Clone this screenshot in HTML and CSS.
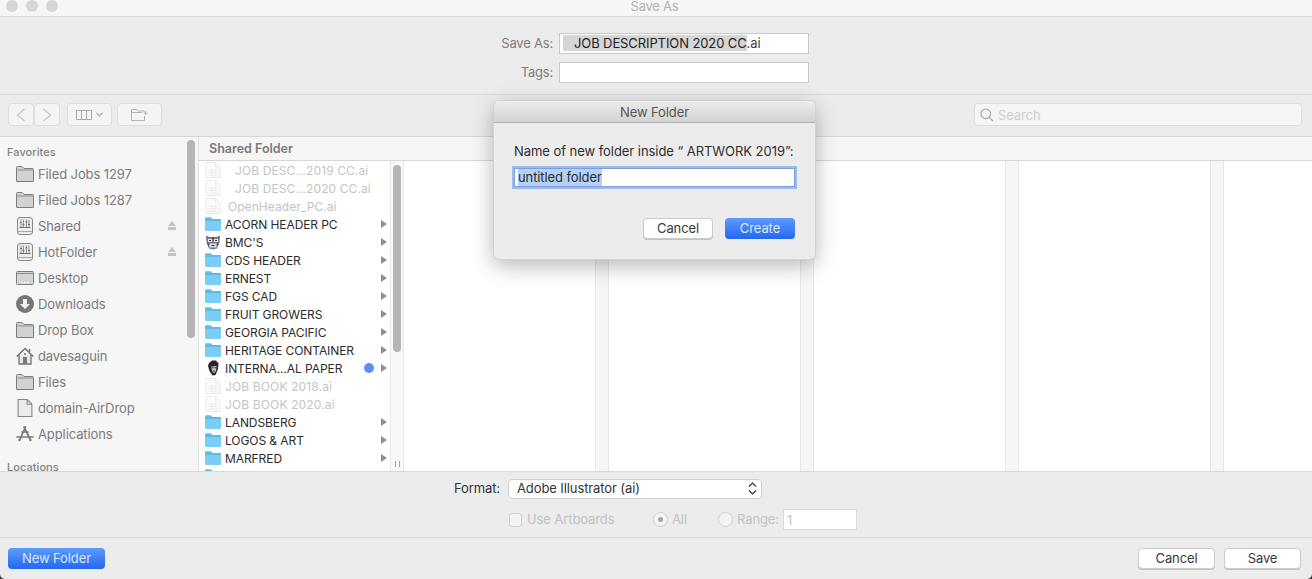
FILE: index.html
```html
<!DOCTYPE html>
<html lang="en">
<head>
<meta charset="utf-8">
<title>Save As</title>
<link rel="stylesheet" href="styles.css">
</head>
<body>
<svg class="defs" width="0" height="0" aria-hidden="true">
  <symbol id="gfolder" viewBox="0 0 18 16">
    <path d="M.5 15V1.500Q.5 .5 1.500 .5H6L8 2.500H16.500Q17.500 2.500 17.500 3.500V15Q17.500 15.500 17 15.500H1Q.5 15.500 .5 15Z" fill="#d2d2d2" stroke="#7d7d7d"/>
    <path d="M.5 4H17.500" stroke="#8d8d8d" fill="none"/>
  </symbol>
  <symbol id="server" viewBox="0 0 16 18">
    <rect x=".5" y=".5" width="15" height="17" rx="2.500" fill="#ededed" stroke="#8a8a8a"/>
    <path d="M4 2.500V10M6.500 2.500V10M9.500 2.500V10M12 2.500V10" stroke="#8a8a8a" stroke-width=".9" fill="none"/>
    <path d="M3 5.500H5M5.500 7.500H7.500M8.500 5H10.500M11 7.500H13M2.500 10.500H13.500" stroke="#6d6d6d" stroke-width="1.100" fill="none"/>
    <path d="M1 14.500H15" stroke="#a8a8a8"/>
  </symbol>
  <symbol id="desktop" viewBox="0 0 18 14">
    <rect x=".5" y=".5" width="17" height="13" rx="1" fill="#d4d4d4" stroke="#7d7d7d"/>
    <path d="M1 2.500H17" stroke="#8d8d8d"/>
    <path d="M5 11.500H6.500M8 11.500H9.500M11 11.500H12.500" stroke="#fff" stroke-width="1.500"/>
  </symbol>
  <symbol id="download" viewBox="0 0 18 18">
    <circle cx="9" cy="9" r="9" fill="#777"/>
    <path d="M7 4H11V9H14L9 14L4 9H7Z" fill="#f2f2f2"/>
  </symbol>
  <symbol id="home" viewBox="0 0 18 18">
    <path d="M3 8V17H15V8" fill="#e6e6e6" stroke="#757575" stroke-width="1.300"/>
    <path d="M.8 9.500L9 1.500L17.200 9.500M13.500 2V5" fill="none" stroke="#757575" stroke-width="1.600"/>
    <path d="M7 10H11V17H7Z" fill="#777"/>
    <circle cx="9" cy="7" r="1.100" fill="#777"/>
  </symbol>
  <symbol id="file" viewBox="0 0 14 17">
    <path d="M.5 .5H9L13.500 5V16.500H.5Z" fill="#ececec" stroke="#858585"/>
    <path d="M9 .5V5H13.500" fill="none" stroke="#858585"/>
  </symbol>
  <symbol id="apps" viewBox="0 0 18 16">
    <path d="M9.500 1L4 13M8 1L14 13M1 11H17M6 6H12" fill="none" stroke="#7b7b7b" stroke-width="1.700" stroke-linecap="round"/>
    <circle cx="3.500" cy="14" r="1.200" fill="#7b7b7b"/>
    <circle cx="14.500" cy="14" r="1.200" fill="#7b7b7b"/>
  </symbol>
  <symbol id="bfolder" viewBox="0 0 16 14">
    <path d="M0 12.800V1.200Q0 .2 1 .2H5.300Q6 .2 6.500 .8L7.300 2H15Q16 2 16 3V12.800Q16 13.800 15 13.800H1Q0 13.800 0 12.800Z" fill="#62bff0"/>
    <path d="M0 3.200H16V12.800Q16 13.800 15 13.800H1Q0 13.800 0 12.800Z" fill="#79cdf6"/>
    <path d="M0 3.200H16" stroke="#4fa9de" stroke-width=".7"/>
  </symbol>
  <symbol id="doc" viewBox="0 0 15 16">
    <path d="M.5 .5H10L14.500 5V15.500H.5Z" fill="#fbfbfb" stroke="#e9e9e9"/>
    <path d="M10 .5V5H14.500M2.500 8H12.500M2.500 10.500H12.500M2.500 13H12.500M6 7V14M9.500 7V14" fill="none" stroke="#ededed"/>
  </symbol>
  <symbol id="tiger" viewBox="0 0 16 16">
    <path d="M1 1.500L4.500 3H11.500L15 1.500L14.500 8.500L12 14.500L8 15.500L4 14.500L1.500 8.500Z" fill="#77778a"/>
    <path d="M3 5H7V8H3ZM9 5H13V8H9Z" fill="#e8e8f0"/>
    <path d="M4.500 9.500H11.500V13.500H4.500Z" fill="#dedee8"/>
    <path d="M4 6.500H6M10 6.500H12M6.500 11.500H9.500M8 3V5M2.500 10L4 11M13.500 10L12 11" stroke="#1b1b22" stroke-width=".9"/>
  </symbol>
  <symbol id="face" viewBox="0 0 12 16">
    <path d="M2 3L5 .5H9L11.500 3.500L11 9L8.500 15L5.500 15.500L2.500 11L1 6Z" fill="#24242a"/>
    <path d="M4 6.500L9.500 6L9 11L7 13.500L5 11Z" fill="#c9c9c9"/>
    <path d="M4.500 7.800H6.500M7.500 7.800H9M6 11H8" stroke="#222"/>
  </symbol>
</svg>

<div class="window">
  <header class="titlebar">
    <div class="lights"><i class="light"></i><i class="light"></i><i class="light"></i></div>
    <div class="window-title">Save As</div>
  </header>

  <section class="name-panel">
    <div class="field-row">
      <label class="field-label">Save As:</label>
      <div class="text-field"><span class="sel-name">JOB DESCRIPTION 2020 CC</span><span class="ext">.ai</span></div>
    </div>
    <div class="field-row">
      <label class="field-label">Tags:</label>
      <div class="text-field"></div>
    </div>
  </section>

  <nav class="toolbar">
    <div class="nav-group">
      <div class="tbtn tbtn-nav"><svg width="10" height="14" viewBox="0 0 10 14"><path d="M8.500 1L1.500 7L8.500 13" fill="none" stroke="#c6c6c6" stroke-width="1.200"/></svg></div>
      <div class="tbtn tbtn-nav"><svg width="10" height="14" viewBox="0 0 10 14"><path d="M1.500 1L8.500 7L1.500 13" fill="none" stroke="#c6c6c6" stroke-width="1.200"/></svg></div>
    </div>
    <div class="tbtn tbtn-view">
      <svg width="16" height="10" viewBox="0 0 16 10"><path d="M.5 .5H15.500V9.500H.5ZM5.500 .5V9.500M10.500 .5V9.500" fill="none" stroke="#a8a8a8"/></svg>
      <svg width="7" height="5" viewBox="0 0 7 5"><path d="M.5 .8L3.500 3.800L6.500 .8" fill="none" stroke="#a8a8a8" stroke-width="1.200"/></svg>
    </div>
    <div class="tbtn tbtn-new">
      <svg width="17" height="12" viewBox="0 0 17 12"><path d="M.5 11.500V.5H6L7.500 2H13.500M13.500 7V11.500H.5M.5 3.500H11M14.500 2V6M12.500 4H16.500" fill="none" stroke="#b2b2b2"/></svg>
    </div>
    <div class="search">
      <svg width="14" height="14" viewBox="0 0 14 14"><circle cx="5.800" cy="5.800" r="4.800" fill="none" stroke="#a4a4a4" stroke-width="1.100"/><path d="M9.300 9.300L13 13" stroke="#a4a4a4" stroke-width="1.200"/></svg>
      <span class="search-text">Search</span>
    </div>
  </nav>

  <main class="browser">
    <aside class="sidebar">
      <h2 class="side-head">Favorites</h2>
      <ul class="side-list">
        <li class="side-item"><svg class="side-icon"><use href="#gfolder"/></svg><span>Filed Jobs 1297</span></li>
        <li class="side-item"><svg class="side-icon"><use href="#gfolder"/></svg><span>Filed Jobs 1287</span></li>
        <li class="side-item"><svg class="side-icon"><use href="#server"/></svg><span>Shared</span><i class="eject"></i></li>
        <li class="side-item"><svg class="side-icon"><use href="#server"/></svg><span>HotFolder</span><i class="eject"></i></li>
        <li class="side-item"><svg class="side-icon"><use href="#desktop"/></svg><span>Desktop</span></li>
        <li class="side-item"><svg class="side-icon"><use href="#download"/></svg><span>Downloads</span></li>
        <li class="side-item"><svg class="side-icon"><use href="#gfolder"/></svg><span>Drop Box</span></li>
        <li class="side-item"><svg class="side-icon"><use href="#home"/></svg><span>davesaguin</span></li>
        <li class="side-item"><svg class="side-icon"><use href="#gfolder"/></svg><span>Files</span></li>
        <li class="side-item"><svg class="side-icon"><use href="#file"/></svg><span>domain-AirDrop</span></li>
        <li class="side-item"><svg class="side-icon"><use href="#apps"/></svg><span>Applications</span></li>
      </ul>
      <h2 class="side-head side-head-2">Locations</h2>
      <div class="side-thumb"></div>
    </aside>

    <div class="content">
      <div class="pathbar">Shared Folder</div>
      <div class="columns">
        <div class="col col-list">
          <ul class="rows">
            <li class="row off"><svg class="ri"><use href="#doc"/></svg><span class="t t-indent2">JOB DESC...2019 CC.ai</span></li>
            <li class="row off"><svg class="ri"><use href="#doc"/></svg><span class="t t-indent2">JOB DESC...2020 CC.ai</span></li>
            <li class="row off"><svg class="ri"><use href="#doc"/></svg><span class="t t-indent1">OpenHeader_PC.ai</span></li>
            <li class="row"><svg class="ri"><use href="#bfolder"/></svg><span class="t">ACORN HEADER PC</span><i class="arrow"></i></li>
            <li class="row"><svg class="ri"><use href="#tiger"/></svg><span class="t">BMC'S</span><i class="arrow"></i></li>
            <li class="row"><svg class="ri"><use href="#bfolder"/></svg><span class="t">CDS HEADER</span><i class="arrow"></i></li>
            <li class="row"><svg class="ri"><use href="#bfolder"/></svg><span class="t">ERNEST</span><i class="arrow"></i></li>
            <li class="row"><svg class="ri"><use href="#bfolder"/></svg><span class="t">FGS CAD</span><i class="arrow"></i></li>
            <li class="row"><svg class="ri"><use href="#bfolder"/></svg><span class="t">FRUIT GROWERS</span><i class="arrow"></i></li>
            <li class="row"><svg class="ri"><use href="#bfolder"/></svg><span class="t">GEORGIA PACIFIC</span><i class="arrow"></i></li>
            <li class="row"><svg class="ri"><use href="#bfolder"/></svg><span class="t">HERITAGE CONTAINER</span><i class="arrow"></i></li>
            <li class="row"><svg class="ri"><use href="#face"/></svg><span class="t">INTERNA...AL PAPER</span><i class="dot"></i><i class="arrow"></i></li>
            <li class="row off"><svg class="ri"><use href="#doc"/></svg><span class="t">JOB BOOK 2018.ai</span></li>
            <li class="row off"><svg class="ri"><use href="#doc"/></svg><span class="t">JOB BOOK 2020.ai</span></li>
            <li class="row"><svg class="ri"><use href="#bfolder"/></svg><span class="t">LANDSBERG</span><i class="arrow"></i></li>
            <li class="row"><svg class="ri"><use href="#bfolder"/></svg><span class="t">LOGOS &amp; ART</span><i class="arrow"></i></li>
            <li class="row"><svg class="ri"><use href="#bfolder"/></svg><span class="t">MARFRED</span><i class="arrow"></i></li>
            <li class="row"><svg class="ri"><use href="#bfolder"/></svg><span class="t"></span></li>
          </ul>
          <div class="col-track"><div class="list-thumb"></div><div class="grip"></div></div>
        </div>
        <div class="col"><div class="col-body"></div><div class="col-gap"></div></div>
        <div class="col"><div class="col-body"></div><div class="col-gap"></div></div>
        <div class="col"><div class="col-body"></div><div class="col-gap"></div></div>
        <div class="col"><div class="col-body"></div><div class="col-gap"></div></div>
        <div class="col col-last"><div class="col-body"></div></div>
      </div>
    </div>
  </main>

  <section class="options">
    <div class="format-row">
      <span class="format-label">Format:</span>
      <div class="select"><span class="select-text">Adobe Illustrator (ai)</span>
        <svg width="9" height="13" viewBox="0 0 9 13"><path d="M1 4.500L4.500 1L8 4.500M1 8.500L4.500 12L8 8.500" fill="none" stroke="#333" stroke-width="1.200"/></svg>
      </div>
    </div>
    <div class="art-row">
      <i class="check"></i><span class="dim art-label">Use Artboards</span>
      <i class="radio radio-on"></i><span class="dim all-label">All</span>
      <i class="radio"></i><span class="dim range-label">Range:</span>
      <div class="range-input">1</div>
    </div>
  </section>

  <footer class="actions">
    <div class="btn btn-blue btn-newfolder">New Folder</div>
    <div class="actions-right">
      <div class="btn btn-white btn-wide">Cancel</div>
      <div class="btn btn-white btn-wide">Save</div>
    </div>
  </footer>

  <div class="dialog">
    <div class="dialog-title">New Folder</div>
    <div class="dialog-body">
      <p class="dialog-label">Name of new folder inside “ ARTWORK 2019”:</p>
      <div class="dialog-input"><span class="dialog-sel">untitled folder</span></div>
      <div class="dialog-btns">
        <div class="btn btn-white btn-dlg">Cancel</div>
        <div class="btn btn-blue btn-dlg">Create</div>
      </div>
    </div>
  </div>
</div>
</body>
</html>
```

FILE: styles.css
```css
* { box-sizing: border-box; }
html, body { margin: 0; padding: 0; height: 100%; }
body {
  background: #3a3a3a;
  font-family: Inter, "Liberation Sans", sans-serif;
  font-size: 13px;
  letter-spacing: -.1px;
  overflow: hidden;
}
ul { list-style: none; margin: 0; padding: 0; }
h2, p { margin: 0; }
i { display: block; font-style: normal; }
.defs { position: absolute; }

.window {
  position: relative;
  width: 1312px;
  height: 579px;
  background: #ececec;
  border-radius: 0 0 5px 5px;
  overflow: hidden;
  display: flex;
  flex-direction: column;
}

/* title bar */
.titlebar {
  height: 17px;
  flex: none;
  background: #f6f6f6;
  border-bottom: 1px solid #d6d6d6;
  display: grid;
  grid-template-columns: 1fr auto 1fr;
  grid-template-rows: 12px;
  align-content: start;
}
.lights { display: flex; gap: 8px; padding-left: 6px; }
.light { width: 12px; height: 12px; border-radius: 50%; background: #d6d6d6; }
.window-title { color: #b2b2b2; padding-right: 3px; line-height: 12px; letter-spacing: -.25px; }

/* name panel */
.name-panel {
  height: 78px;
  flex: none;
  border-bottom: 1px solid #d9d9d9;
  padding-top: 16px;
  display: flex;
  flex-direction: column;
  gap: 8px;
}
.field-row { display: flex; align-items: center; height: 21px; }
.field-label { width: 553px; text-align: right; color: #7c7c7c; padding-bottom: 2px; letter-spacing: -.2px; }
.text-field {
  margin-left: 6px;
  width: 250px;
  height: 21px;
  background: #fff;
  border: 1px solid #c8c8c8;
  padding: 1px 3px;
  color: #222;
  line-height: 16px;
  display: flex;
}
.sel-name { background: #d6d6d6; padding-left: 11px; height: 16px; }
.ext { color: #444; }

/* toolbar */
.toolbar {
  height: 42px;
  flex: none;
  border-bottom: 1px solid #d6d6d6;
  padding: 8px 10px 8px 8px;
  display: flex;
  align-items: flex-start;
}
.nav-group { display: flex; }
.tbtn {
  height: 23px;
  background: #f4f4f4;
  border: 1px solid #dedede;
  border-radius: 4px;
  display: flex;
  align-items: center;
  justify-content: center;
}
.tbtn-nav { width: 26px; }
.tbtn-view { width: 45px; margin-left: 7px; gap: 4px; }
.tbtn-new { width: 45px; margin-left: 5px; }
.search {
  width: 328px;
  height: 23px;
  margin-left: auto;
  background: #f5f5f5;
  border: 1px solid #dedede;
  border-radius: 4px;
  display: flex;
  align-items: center;
  padding: 1px 0 0 5px;
  gap: 4px;
}
.search-text { color: #cfcfcf; }

/* browser */
.browser { height: 335px; flex: none; display: flex; border-bottom: 1px solid #d8d8d8; }
.sidebar {
  position: relative;
  width: 199px;
  flex: none;
  background: #f6f6f6;
  border-right: 1px solid #e2e2e2;
  overflow: hidden;
  padding-top: 9px;
}
.side-head { font-size: 11px; font-weight: 500; color: #838383; padding-left: 7px; height: 15px; line-height: 13px; letter-spacing: .05px; }
.side-head-2 { margin-top: 14px; }
.side-item { height: 26px; display: flex; align-items: center; padding-left: 16px; color: #7b7b7b; position: relative; }
.side-icon { width: 18px; height: 18px; flex: none; margin-right: 4px; }
.eject { position: absolute; left: 168px; top: 8px; width: 8px; height: 9px;
  background: linear-gradient(#c4c4c4 0 5px, transparent 5px 6px, #c4c4c4 6px);
  clip-path: polygon(50% 0, 100% 55%, 100% 100%, 0 100%, 0 55%);
}
.side-thumb { position: absolute; left: 187px; top: 3px; width: 8px; height: 198px; background: #b5b5b5; border-radius: 4px; }

.content { flex: 1; min-width: 0; display: flex; flex-direction: column; }
.pathbar {
  height: 24px;
  flex: none;
  background: #f6f6f6;
  border-bottom: 1px solid #d6d6d6;
  padding-left: 10px;
  line-height: 23px;
  font-size: 12.500px;
  font-weight: 600;
  color: #7a7a7a;
  letter-spacing: 0;
}
.columns { flex: 1; min-height: 0; display: flex; background: #fff; overflow: hidden; }
.col { flex: none; width: 205px; display: flex; }
.col-last { width: 88px; }
.col-body { flex: 1; background: #fff; }
.col-gap { width: 14px; background: #f6f6f6; border-left: 1px solid #e8e8e8; border-right: 1px solid #e8e8e8; }
.col-list { position: relative; }
.rows { width: 191px; flex: none; }
.row { height: 18px; display: flex; align-items: center; padding-left: 6px; position: relative; color: #2c2c2c; font-size: 12px; letter-spacing: -.08px; }
.row.off { color: #c4c4c4; letter-spacing: .14px; }
.ri { width: 16px; height: 16px; flex: none; margin-right: 4px; }
.t-indent1 { margin-left: 3px; letter-spacing: .05px; }
.t-indent2 { margin-left: 10px; letter-spacing: .1px; }
.arrow { position: absolute; left: 182px; top: 5px; width: 0; height: 0; border-left: 6px solid #8e8e8e; border-top: 4px solid transparent; border-bottom: 4px solid transparent; }
.dot { position: absolute; left: 165px; top: 4px; width: 10px; height: 10px; border-radius: 50%; background: #5b8ff4; }
.col-track { position: relative; width: 14px; background: #f8f8f8; border-left: 1px solid #e8e8e8; border-right: 1px solid #e8e8e8; }
.list-thumb { position: absolute; left: 2px; top: 4px; width: 8px; height: 187px; background: #b5b5b5; border-radius: 4px; }
.grip { position: absolute; left: 4px; top: 300px; width: 5px; height: 6px; border-left: 1px solid #a8a8a8; border-right: 1px solid #a8a8a8; }

/* options */
.options { height: 66px; flex: none; border-bottom: 1px solid #d9d9d9; padding-top: 6px; }
.format-row { display: flex; align-items: center; height: 21px; }
.format-label { width: 500px; text-align: right; color: #333; padding-bottom: 2px; }
.select {
  margin-left: 8px;
  width: 254px;
  height: 20px;
  background: #fff;
  border: 1px solid #cfcfcf;
  border-radius: 4px;
  display: flex;
  align-items: center;
  justify-content: space-between;
  padding: 0 4px 0 8px;
  color: #333;
}
.select-text { padding-bottom: 2px; }
.art-row { display: flex; align-items: center; height: 21px; margin-top: 10px; padding-left: 509px; }
.dim { color: #c2c2c2; padding-bottom: 2px; }
.check { width: 13px; height: 14px; background: #f3f3f3; border: 1px solid #d0d0d0; border-radius: 3px; }
.art-label { margin-left: 5px; width: 126px; }
.radio { width: 15px; height: 15px; border-radius: 50%; background: #f4f4f4; border: 1px solid #d0d0d0; position: relative; flex: none; }
.radio-on::after { content: ""; position: absolute; left: 4px; top: 4px; width: 5px; height: 5px; border-radius: 50%; background: #a4a4a4; }
.all-label { margin-left: 4px; width: 46px; }
.range-label { margin-left: 4px; width: 46px; }
.range-input { width: 74px; height: 21px; background: #fff; border: 1px solid #dcdcdc; color: #c2c2c2; line-height: 20px; padding-left: 3px; }

/* actions */
.actions { flex: 1; display: flex; justify-content: space-between; padding: 10px 11px 0 8px; align-items: flex-start; }
.actions-right { display: flex; gap: 9px; }
.btn { height: 21px; border-radius: 4px; display: flex; align-items: center; justify-content: center; padding-bottom: 2px; }
.btn-blue { background: linear-gradient(#5d9bfb, #2467f0); color: #d9e7ff; }
.btn-white { background: #fff; border: 1px solid #cbcbcb; color: #3a3a3a; box-shadow: 0 1px 0 #c2c2c2; }
.btn-newfolder { width: 97px; }
.btn-wide { width: 77px; }

/* dialog */
.dialog {
  position: absolute;
  left: 494px;
  top: 101px;
  width: 321px;
  height: 158px;
  background: #ececec;
  border-radius: 5px;
  box-shadow: 0 0 0 1px #d2d2d2, 0 6px 22px rgba(0, 0, 0, .3);
  overflow: hidden;
}
.dialog-title {
  height: 22px;
  background: linear-gradient(#ececec, #d3d3d3);
  border-bottom: 1px solid #adadad;
  text-align: center;
  line-height: 22px;
  color: #555;
}
.dialog-body { padding: 20px 20px 0; }
.dialog-label { line-height: 16px; color: #2e2e2e; letter-spacing: -.05px; }
.dialog-input {
  margin: 9px 0 0 0;
  width: 281px;
  height: 19px;
  background: #fff;
  border: 1px solid #7e9fd8;
  box-shadow: 0 0 0 2px #9cbaee;
  padding-left: 3px;
  display: flex;
  align-items: stretch;
  color: #2a2a2a;
  line-height: 17px;
}
.dialog-sel { background: #b4d2f8; }
.dialog-btns { display: flex; justify-content: flex-end; gap: 12px; margin-top: 31px; width: 281px; }
.btn-dlg { width: 70px; }
```
